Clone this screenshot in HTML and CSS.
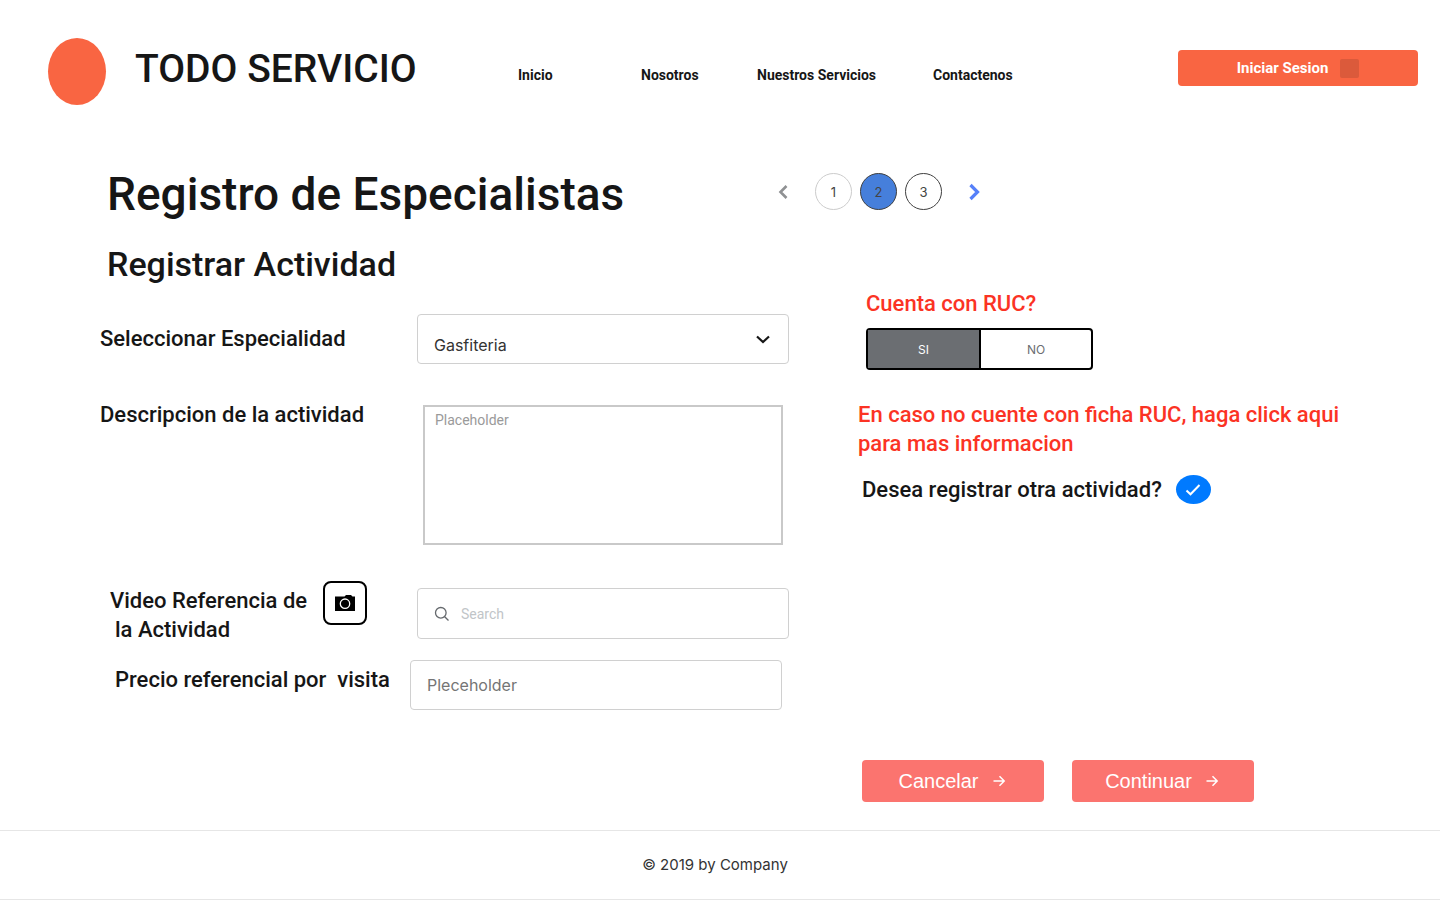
FILE: index.html
```html
<!DOCTYPE html>
<html lang="es">
<head>
<meta charset="utf-8">
<meta name="viewport" content="width=device-width, initial-scale=1">
<title>Todo Servicio - Registro de Especialistas</title>
<link rel="stylesheet" href="styles.css">
</head>
<body>
<header class="site-header">
  <div class="brand">
    <span class="brand-mark"></span>
    <span class="brand-name">TODO SERVICIO</span>
  </div>
  <nav class="site-nav" aria-label="Principal">
    <a class="nav-inicio" href="#">Inicio</a>
    <a class="nav-nosotros" href="#">Nosotros</a>
    <a class="nav-servicios" href="#">Nuestros Servicios</a>
    <a href="#">Contactenos</a>
  </nav>
  <button class="login" type="button">Iniciar Sesion<span class="login-icon"></span></button>
</header>

<main>
  <div class="page-head">
    <h1>Registro de Especialistas</h1>
    <nav class="steps" aria-label="Pasos">
      <button class="step-arrow" type="button" aria-label="Anterior">
        <svg width="16" height="16" viewBox="0 0 16 16"><path d="M11.500 2L5.500 8L11.500 14" fill="none" stroke="#8f9193" stroke-width="2.600"/></svg>
      </button>
      <button class="step step-done" type="button">1</button>
      <button class="step step-current" type="button" aria-current="step">2</button>
      <button class="step" type="button">3</button>
      <button class="step-arrow" type="button" aria-label="Siguiente">
        <svg width="18" height="18" viewBox="0 0 18 18"><path d="M5.500 2L12.500 9L5.500 16" fill="none" stroke="#5680f9" stroke-width="3.200"/></svg>
      </button>
    </nav>
  </div>
  <h2>Registrar Actividad</h2>

  <form class="activity">
    <div class="fields">
      <div class="row">
        <label class="label label-select" for="especialidad">Seleccionar Especialidad</label>
        <div class="select-box">
          <select id="especialidad"><option>Gasfiteria</option></select>
          <svg class="chevron" width="16" height="16" viewBox="0 0 16 16"><path d="M2 5.500L8 11L14 5.500" fill="none" stroke="#161616" stroke-width="2.200"/></svg>
        </div>
      </div>
      <div class="row row-description">
        <label class="label" for="descripcion">Descripcion de la actividad</label>
        <textarea id="descripcion" placeholder="Placeholder"></textarea>
      </div>
      <div class="row row-video">
        <div class="video-label">
          <label class="label" for="video">Video Referencia de<br><span class="second-line">la Actividad</span></label>
          <button class="camera" type="button" aria-label="Camara">
            <svg width="20" height="16" viewBox="0 0 20 16"><path d="M0 1.500H9.500L11 0H16L17.500 1.500H20V16H0Z" fill="#000"/><circle cx="10" cy="8.700" r="4.700" fill="none" stroke="#fff" stroke-width="1.300"/></svg>
          </button>
        </div>
        <div class="search-box">
          <svg width="16" height="16" viewBox="0 0 16 16"><circle cx="6.800" cy="6.800" r="5.300" fill="none" stroke="#65696d" stroke-width="1.300"/><path d="M10.700 10.700L14.500 14.500" stroke="#65696d" stroke-width="1.300"/></svg>
          <input id="video" type="search" placeholder="Search">
        </div>
      </div>
      <div class="row row-price">
        <label class="label" for="precio">Precio referencial por&nbsp; visita</label>
        <input class="price" id="precio" type="text" placeholder="Pleceholder">
      </div>
    </div>

    <div class="side">
      <fieldset class="ruc">
        <legend class="label alert">Cuenta con RUC?</legend>
        <div class="toggle">
          <label><input type="radio" name="ruc" checked><span>SI</span></label>
          <label><input type="radio" name="ruc"><span>NO</span></label>
        </div>
      </fieldset>
      <a class="label alert info" href="#">En caso no cuente con ficha RUC, haga click aqui para mas informacion</a>
      <div class="another">
        <label class="label" for="otra">Desea registrar otra actividad?</label>
        <span class="check">
          <input id="otra" type="checkbox" checked>
          <svg width="18" height="16" viewBox="0 0 18 16"><path d="M2.500 8.500L6.500 12.300L15.500 3" fill="none" stroke="#fff" stroke-width="2"/></svg>
        </span>
      </div>
      <div class="actions">
        <button type="button">Cancelar<svg width="14" height="14" viewBox="0 0 14 14"><path d="M1.500 7H12M7.500 2.200L12.200 7L7.500 11.800" fill="none" stroke="#fff" stroke-width="1.500"/></svg></button>
        <button type="submit">Continuar<svg width="14" height="14" viewBox="0 0 14 14"><path d="M1.500 7H12M7.500 2.200L12.200 7L7.500 11.800" fill="none" stroke="#fff" stroke-width="1.500"/></svg></button>
      </div>
    </div>
  </form>
</main>

<footer>© 2019 by Company</footer>
</body>
</html>
```

FILE: styles.css
```css
* { box-sizing: border-box; }

body {
  margin: 0;
  background: #fff;
  color: #161616;
  font-family: Roboto, "Liberation Sans", sans-serif;
}

button, input, select, textarea { font: inherit; color: inherit; }
button { cursor: pointer; }
a { color: inherit; text-decoration: none; }

.site-header {
  display: grid;
  grid-template-columns: 470px 1fr 240px;
  align-items: start;
  padding: 38px 22px 0 48px;
}

.brand { display: flex; gap: 29px; }
.brand-mark {
  width: 58px;
  height: 67px;
  border-radius: 50%;
  background: #f96542;
}
.brand-name {
  font-size: 39px;
  line-height: 62px;
  font-weight: 500;
  white-space: nowrap;
}

.site-nav {
  display: grid;
  grid-template-columns: 123px 116px 176px auto;
  padding-top: 28px;
  font-size: 14px;
  line-height: 18px;
  font-weight: 700;
}

.login {
  display: flex;
  align-items: center;
  justify-content: center;
  gap: 12px;
  height: 36px;
  margin-top: 12px;
  border: 0;
  border-radius: 4px;
  background: #f96542;
  color: #fff;
  font-size: 15px;
  font-weight: 700;
}
.login-icon {
  width: 19px;
  height: 19px;
  border-radius: 2px;
  background: #db5a3b;
}

.page-head {
  display: grid;
  grid-template-columns: 666px 1fr;
  align-items: start;
  padding: 58px 0 0 107px;
}
h1, h2 { margin: 0; font-weight: 500; white-space: nowrap; }
h1 { font-size: 46px; line-height: 62px; }
h2 { padding: 17px 0 0 107px; font-size: 34px; line-height: 44px; }

.steps { display: flex; align-items: center; gap: 8px; padding-top: 10px; }
.step {
  width: 37px;
  height: 37px;
  padding: 0;
  border: 1px solid #3f3f3f;
  border-radius: 50%;
  background: #fff;
  color: #444;
  font-family: Inter, sans-serif;
  font-size: 13px;
}
.step-done { border-color: #ccc; }
.step-current { background: #467fdb; }
.step-arrow {
  display: flex;
  align-items: center;
  justify-content: center;
  width: 20px;
  height: 36px;
  padding: 0;
  border: 0;
  background: none;
}
.step-arrow:first-child { margin-right: 14px; }
.step-arrow:last-child { margin-left: 14px; }

.activity {
  display: grid;
  grid-template-columns: 689fr 496fr;
  column-gap: 69px;
  padding: 0 86px 0 100px;
}

.label {
  font-size: 22px;
  line-height: 29px;
  font-weight: 500;
}
.alert { color: #fb3324; }

.fields { padding-top: 28px; }
.row {
  display: grid;
  grid-template-columns: 317px 1fr;
  align-items: start;
}
.row > .label { white-space: nowrap; }
.label-select { padding-top: 10px; }

.select-box { display: grid; align-items: center; }
.select-box > * { grid-area: 1 / 1; }
.chevron { justify-self: end; margin-right: 18px; pointer-events: none; }
select {
  appearance: none;
  width: 100%;
  height: 50px;
  padding: 11px 48px 0 16px;
  border: 1px solid #d0d0d0;
  border-radius: 4px;
  background: #fff;
  color: #333;
  font-family: Inter, sans-serif;
  font-size: 16px;
}

.row-description { grid-template-columns: 323px 1fr; padding: 41px 6px 0 0; }
.row-description .label { margin-top: -5px; }
textarea {
  display: block;
  width: 100%;
  height: 140px;
  padding: 5px 10px;
  border: 2px solid #c9c9c9;
  background: #fff;
  font-size: 14px;
  line-height: 16px;
  resize: none;
}
::placeholder { color: #9a9a9a; opacity: 1; }

.row-video { padding-top: 36px; }
.video-label { display: flex; gap: 12px; padding-left: 10px; }
.video-label .label { width: 201px; padding-top: 5px; white-space: nowrap; }
.second-line { padding-left: 5px; }
.camera {
  display: flex;
  align-items: center;
  justify-content: center;
  width: 44px;
  height: 44px;
  padding: 0;
  border: 2px solid #000;
  border-radius: 8px;
  background: #fff;
}
.search-box {
  display: flex;
  align-items: center;
  gap: 11px;
  height: 51px;
  margin-top: 7px;
  padding: 0 16px;
  border: 1px solid #d0d0d0;
  border-radius: 4px;
}
.search-box input {
  flex: 1;
  min-width: 0;
  padding: 0;
  border: 0;
  outline: 0;
  appearance: none;
  background: none;
  font-size: 14px;
}
.search-box ::placeholder { color: #c1c5c8; }

.row-price { grid-template-columns: 295px 1fr; padding: 16px 7px 0 15px; }
.row-price .label { padding-top: 5px; }
.price {
  width: 100%;
  height: 50px;
  padding: 0 16px;
  border: 1px solid #d0d0d0;
  border-radius: 4px;
  background: #fff;
  font-family: Inter, sans-serif;
  font-size: 16px;
}
.price::placeholder { color: #757575; }

.side { display: flex; flex-direction: column; padding-top: 3px; }
.ruc { margin: 0; padding: 0 0 0 8px; border: 0; }
.ruc legend { padding: 0; }
.toggle {
  display: grid;
  grid-template-columns: 113px 1fr;
  width: 227px;
  height: 42px;
  margin-top: 10px;
  border: 2px solid #000;
  border-radius: 4px;
  color: #6b6e72;
  font-family: Inter, sans-serif;
  font-size: 12px;
}
.toggle label { display: grid; }
.toggle label:first-child { border-right: 2px solid #000; }
.toggle input, .toggle span { grid-area: 1 / 1; }
.toggle input { appearance: none; margin: 0; }
.toggle input:checked { background: #6b6e72; }
.toggle span { place-self: center; }
.toggle input:checked + span { z-index: 1; color: #fff; }

.info { padding-top: 30px; }
.another { display: flex; gap: 14px; padding: 17px 0 0 4px; }
.check { display: grid; place-items: center; }
.check > * { grid-area: 1 / 1; }
.check svg { z-index: 1; pointer-events: none; }
.check input {
  appearance: none;
  width: 35px;
  height: 29px;
  margin: 0;
  border-radius: 50%;
  background: #007aff;
}

.actions { display: flex; gap: 28px; padding: 256px 0 0 4px; }
.actions button {
  display: flex;
  align-items: center;
  justify-content: center;
  gap: 13px;
  width: 182px;
  height: 42px;
  padding: 0 2px 0 0;
  border: 0;
  border-radius: 4px;
  background: #fb746f;
  color: #fff;
  font-family: "Liberation Sans", Arial, sans-serif;
  font-size: 20px;
}

footer {
  margin-top: 28px;
  padding: 24px 10px 24px 0;
  border-top: 1px solid #e6e6e6;
  border-bottom: 1px solid #e6e6e6;
  color: #333;
  font-family: Inter, sans-serif;
  font-size: 15px;
  line-height: 20px;
  text-align: center;
}
```
